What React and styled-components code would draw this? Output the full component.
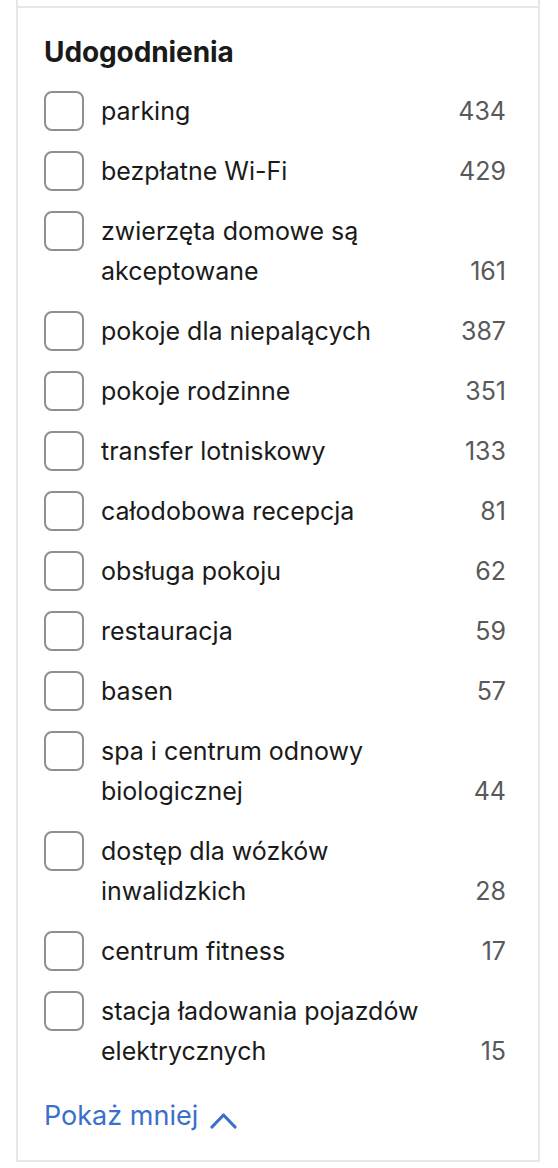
import React, { useState } from 'react';
import styled, { createGlobalStyle } from 'styled-components';

const GlobalStyle = createGlobalStyle`
    body {
        margin: 0;
        background: #ffffff;
        font-family: Inter, "Noto Sans", "Liberation Sans", sans-serif;
        -webkit-font-smoothing: antialiased;
    }
`;

const Panel = styled.div`
    margin: 0 18px 0 16px;
    padding-top: 6px;
    border-left: 2px solid #e7e7e7;
    border-right: 2px solid #e7e7e7;
`;

const Section = styled.section`
    border-top: 2px solid #e7e7e7;
    border-bottom: 2px solid #e7e7e7;
    padding: 28px 32px 24px 26px;
`;

const Title = styled.h2`
    margin: 0 0 23px;
    font-size: 28px;
    line-height: 32px;
    font-weight: 700;
    letter-spacing: -0.1px;
    color: #1a1a1a;
`;

const List = styled.ul`
    list-style: none;
    margin: 0;
    padding: 0;
    display: flex;
    flex-direction: column;
    gap: 20px;
`;

const Row = styled.li`
    display: flex;
    align-items: flex-start;
    gap: 17px;
    cursor: pointer;
`;

const Box = styled.span`
    flex: none;
    width: 40px;
    height: 40px;
    box-sizing: border-box;
    border: 2px solid ${p => (p.checked ? '#006ce4' : '#8f8f8f')};
    background: ${p => (p.checked ? '#006ce4' : '#fff')};
    border-radius: 8px;
`;

const Label = styled.span`
    flex: 1;
    display: flex;
    align-items: flex-end;
    justify-content: space-between;
    gap: 16px;
    font-size: 25px;
    line-height: 40px;
    color: #1a1a1a;
`;

const Name = styled.span`
    max-width: 335px;
`;

const Count = styled.span`
    color: #595959;
`;

const ToggleLink = styled.button`
    margin-top: 25px;
    padding: 0;
    border: none;
    background: none;
    display: flex;
    align-items: center;
    gap: 12px;
    font-family: inherit;
    font-size: 27px;
    line-height: 40px;
    color: #3a6fcb;
    cursor: pointer;

    svg {
        margin-top: 8px;
    }
`;

const items = [
    ['parking', 434],
    ['bezpłatne Wi-Fi', 429],
    ['zwierzęta domowe są akceptowane', 161],
    ['pokoje dla niepalących', 387],
    ['pokoje rodzinne', 351],
    ['transfer lotniskowy', 133],
    ['całodobowa recepcja', 81],
    ['obsługa pokoju', 62],
    ['restauracja', 59],
    ['basen', 57],
    ['spa i centrum odnowy biologicznej', 44],
    ['dostęp dla wózków inwalidzkich', 28],
    ['centrum fitness', 17],
    ['stacja ładowania pojazdów elektrycznych', 15],
];

const App = () => {
    const [checked, setChecked] = useState({});

    const toggle = name => {
        setChecked({ ...checked, [name]: !checked[name] });
    };

    return (
        <>
            <GlobalStyle />
            <Panel>
                <Section>
                    <Title>Udogodnienia</Title>
                    <List>
                        {items.map(([name, count]) => (
                            <Row key={name} onClick={() => toggle(name)}>
                                <Box checked={checked[name]} />
                                <Label>
                                    <Name>{name}</Name>
                                    <Count>{count}</Count>
                                </Label>
                            </Row>
                        ))}
                    </List>
                    <ToggleLink>
                        Pokaż mniej
                        <svg width="27" height="17" viewBox="0 0 27 17" fill="none">
                            <path d="M2 15 L13.5 3 L25 15" stroke="#3a6fcb" strokeWidth="3.2" strokeLinecap="round" strokeLinejoin="round" />
                        </svg>
                    </ToggleLink>
                </Section>
            </Panel>
        </>
    );
};

export default App;
